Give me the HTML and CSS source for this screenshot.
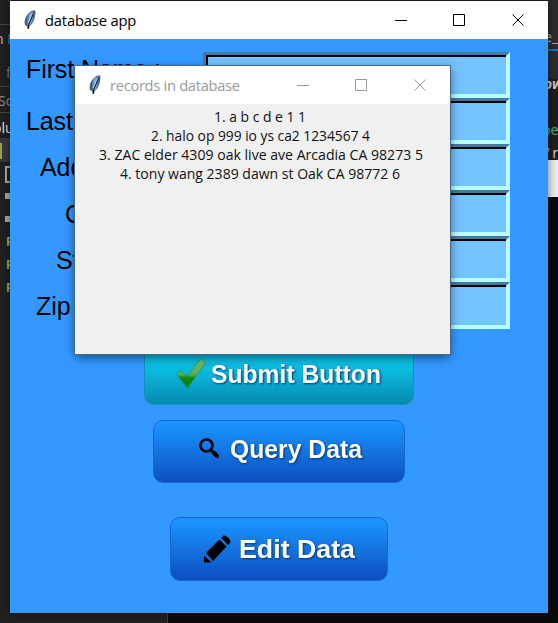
FILE: index.html
```html
<!DOCTYPE html>
<html lang="en">
<head>
<meta charset="utf-8">
<title>database app</title>
<link rel="stylesheet" href="styles.css">
</head>
<body>
<svg width="0" height="0" class="defs">
  <defs>
    <linearGradient id="quill" x1="0" x2="1"><stop offset="0" stop-color="#24476f"/><stop offset=".5" stop-color="#7eb4ec"/><stop offset="1" stop-color="#2a5c96"/></linearGradient>
    <linearGradient id="tick" x1="0" y1="0" x2="0" y2="1"><stop offset="0" stop-color="#78c27a"/><stop offset=".55" stop-color="#4fae50"/><stop offset=".65" stop-color="#118a12"/><stop offset="1" stop-color="#078006"/></linearGradient>
    <symbol id="feather" viewBox="0 0 12 21">
      <path d="M10.800.8C7 .8 3.200 4 1.600 9c-.7 2.500-.6 4.500 0 6l2 1 .6 3 1.200-3C9 13 11.500 6 10.800.8Z" fill="url(#quill)" stroke="#4a5058" stroke-width=".9"/>
      <path d="M9.500 3 4.600 15l-.4 4" fill="none" stroke="#111" stroke-width="1"/>
      <path d="M8.500 3 4 13" fill="none" stroke="#bde0ff" stroke-width=".8"/>
    </symbol>
  </defs>
</svg>
<div class="desktop">
  <span class="scrap s1">n <b>E</b></span><span class="scrap s2">f</span><span class="scrap s3">Sc</span>
  <i class="rule r1"></i><i class="rule r2"></i><i class="rule r3"></i>
  <i class="row"></i><span class="scrap s4">olu</span><i class="mark"></i><i class="box"></i><i class="sq q1"></i><i class="sq q2"></i>
  <span class="scrap py p1">P</span><span class="scrap py p2">P</span><span class="scrap py p3">P</span>
  <i class="right"></i><i class="editor"></i><i class="blue"></i><i class="light"></i><i class="terminal"></i><i class="bottom"></i>
  <span class="scrap s5">e_</span><span class="scrap s6">ow</span><span class="scrap s7">pe</span><span class="scrap s8">'<b>r</b></span>

  <main class="window app">
    <header class="titlebar">
      <svg class="feather"><use href="#feather"/></svg><h1>database app</h1>
      <svg class="controls" viewBox="0 0 131 13"><path d="M0 6.500h12M58.500.5h11v11h-11zM117.500.5l11 11M128.500.5l-11 11"/></svg>
    </header>
    <form class="form">
      <label class="l1">First Name :</label><span class="field"></span>
      <label class="l2">Last Name :</label><span class="field"></span>
      <label class="l3">Address :</label><span class="field"></span>
      <label class="l4">City :</label><span class="field"></span>
      <label class="l5">State :</label><span class="field"></span>
      <label class="l6">Zip Code :</label><span class="field"></span>
    </form>
    <div class="buttons">
      <button class="btn submit"><svg width="30" height="31" viewBox="0 0 30 31"><path d="M.5 16 5 12.500l5.500 6L25 .5 29.500 5 11.500 30Z" fill="url(#tick)" stroke="#248b50" stroke-width=".6"/></svg><svg class="label" width="176" height="34"><text x="0" y="26" textLength="170" lengthAdjust="spacingAndGlyphs">Submit Button</text></svg></button>
      <button class="btn query"><svg width="20" height="20" viewBox="0 0 20 20"><circle cx="7.500" cy="7.500" r="6" fill="none" stroke="#000" stroke-width="2.600"/><path d="m11.500 11.500 2.500 2.500" stroke="#000" stroke-width="2"/><path d="m14.500 14.500 3.500 3.500" stroke="#000" stroke-width="4" stroke-linecap="round"/></svg><svg class="label" width="138" height="34"><text x="0" y="23" textLength="132" lengthAdjust="spacingAndGlyphs">Query Data</text></svg></button>
      <button class="btn edit"><svg width="27" height="28" viewBox="0 0 27 28"><path d="M0 20.500 7.500 27.500H0zM2 18 15.500 4.500l7 7L9 26zM17 3l2-2c2-2 9 4 7 7l-2 2z"/></svg><svg class="label" width="122" height="34"><text x="0" y="25.500" textLength="116" lengthAdjust="spacingAndGlyphs">Edit Data</text></svg></button>
    </div>
  </main>

  <section class="window records">
    <header class="titlebar">
      <svg class="feather"><use href="#feather"/></svg><h2>records in database</h2>
      <svg class="controls" viewBox="0 0 131 13"><path d="M0 6.500h12M58.500.5h11v11h-11zM117.500.5l11 11M128.500.5l-11 11"/></svg>
    </header>
    <svg class="list" width="375" height="86">
      <text x="139" y="18" textLength="92" lengthAdjust="spacingAndGlyphs">1. a b c d e 1 1</text>
      <text x="76" y="37" textLength="219" lengthAdjust="spacingAndGlyphs">2. halo op 999 io ys ca2 1234567 4</text>
      <text x="24" y="55.500" textLength="324" lengthAdjust="spacingAndGlyphs">3. ZAC elder 4309 oak live ave Arcadia CA 98273 5</text>
      <text x="45" y="74.500" textLength="280" lengthAdjust="spacingAndGlyphs">4. tony wang 2389 dawn st Oak CA 98772 6</text>
    </svg>
  </section>
</div>
</body>
</html>
```
FILE: styles.css
```css
* { box-sizing: border-box; }
body { margin: 0; overflow: hidden; }
.defs { position: absolute; }
.desktop { position: relative; width: 558px; height: 623px; overflow: hidden; background: #202020; font-family: "Noto Sans", sans-serif; }
.desktop > i, .scrap, .window { position: absolute; }
.scrap { color: #aaa; font-size: 14px; line-height: 18px; white-space: nowrap; }
.scrap b { color: #3d86bd; font-weight: 400; }
.s1 { left: -5px; top: 30px; }
.s2 { left: 6px; top: 64px; color: #777; }
.s3 { left: -2px; top: 92px; color: #888; }
.s4 { left: -7px; top: 119px; color: #ddd; }
.rule { left: 0; width: 10px; height: 1px; background: #444; }
.r1 { top: 24px; } .r2 { top: 86px; } .r3 { top: 112px; }
.row { left: 0; top: 138px; width: 10px; height: 24px; background: #37373d; }
.mark { left: 0; top: 143px; width: 2px; height: 16px; background: #98a34c; }
.box { left: 5px; top: 166px; width: 8px; height: 17px; border: 2px solid #aaa; }
.sq { left: 5px; width: 5px; height: 6px; background: #aaa; }
.q1 { top: 193px; } .q2 { top: 216px; }
.py { left: 6px; color: #a4ac50; font-size: 12px; font-weight: 700; }
.p1 { top: 233px; } .p2 { top: 256px; } .p3 { top: 279px; }
.right { left: 548px; top: 0; width: 10px; height: 79px; background: #2c2c2e; }
.editor { left: 548px; top: 79px; width: 10px; height: 81px; background: #1e1e1e; }
.blue { left: 548px; top: 49px; width: 10px; height: 2px; background: #0879bd; }
.light { left: 548px; top: 160px; width: 10px; height: 37px; background: #ebebeb; }
.terminal { left: 548px; top: 197px; width: 10px; height: 426px; background: #0b0b0b; }
.bottom { left: 167px; top: 613px; width: 391px; height: 10px; background: #0b0b0b; border-left: 1px solid #3c3c3c; }
.s5 { left: 544px; top: 28px; }
.s6 { left: 544px; top: 75px; font-weight: 700; font-style: italic; color: #ccc; }
.s7 { left: 542px; top: 121px; color: #3fb08f; }
.s8 { left: 547px; top: 144px; }
.s8 b { color: #ccc; margin-left: 2px; }

.window { display: flex; flex-direction: column; }
.app { left: 10px; top: 1px; width: 538px; height: 612px; background: #39f; box-shadow: 0 0 8px rgba(0,0,0,.5); }
.titlebar { display: flex; align-items: center; flex: none; height: 38px; padding: 0 22px 0 14px; background: #fff; }
.feather { width: 12px; height: 21px; margin-right: 9px; }
h1, h2 { flex: 1; margin: 0; padding-bottom: 1px; font: 400 14.700px/20px "Open Sans", sans-serif; letter-spacing: -.15px; color: #000; }
.controls { width: 131px; height: 13px; }
.controls path { fill: none; stroke: #000; stroke-width: 1; }

.form { display: grid; grid-template-columns: 193px 307px; grid-template-rows: repeat(6, 46.200px); padding-top: 12.500px; height: 293px; }
label { padding-top: 8.500px; font: 25px/30px "Liberation Sans", sans-serif; letter-spacing: -.1px; color: #000; white-space: nowrap; }
.l1 { padding-top: 2.500px; padding-left: 16px; }
.l2 { padding-left: 16px; } .l3 { padding-left: 30px; } .l4 { padding-left: 55px; }
.l5 { padding-left: 46px; } .l6 { padding-left: 26px; }
.field { position: relative; border: 4px solid; border-color: #467a9e #b8ffff #b8ffff #467a9e; background: #74c4ff; }
.field::before { content: ""; position: absolute; inset: -1px 0 0 -1px; border-top: 2px solid #000; border-left: 2px solid #000; }

.buttons { display: flex; flex-direction: column; align-items: center; }
.btn { display: flex; align-items: center; border: 1px solid #1767d5; border-radius: 10px; padding: 0; background: linear-gradient(#1a98ff, #0e4fc1); }
.submit { width: 270px; height: 63px; margin-top: 10px; padding-left: 31px; border-color: #1691b5; background: linear-gradient(#09c7ef, #0cbce0 42%, #078bb0); }
.submit > svg:first-child { margin-right: 5px; }
.query { width: 252px; height: 63px; margin: 15px 1px 0 0; padding-left: 45px; }
.query > svg:first-child { margin: -7px 11px 0 0; }
.edit { width: 218px; height: 64px; margin-top: 34px; padding-left: 33px; }
.edit > svg:first-child { margin-right: 8px; }
.label { overflow: visible; flex: none; fill: #fff; font: 700 26px "Liberation Sans", sans-serif; filter: drop-shadow(1px 1px 1px #003878); }

.records { left: 75px; top: 66px; width: 375px; height: 288px; background: #f0f0f0; box-shadow: 0 0 0 1px #43688a, 0 3px 10px rgba(0,0,0,.55); }
.records h2 { letter-spacing: -.3px; color: #999; }
.records .controls path { stroke: #999; }
.list { font: 14px "Open Sans", sans-serif; fill: #111; }
```
